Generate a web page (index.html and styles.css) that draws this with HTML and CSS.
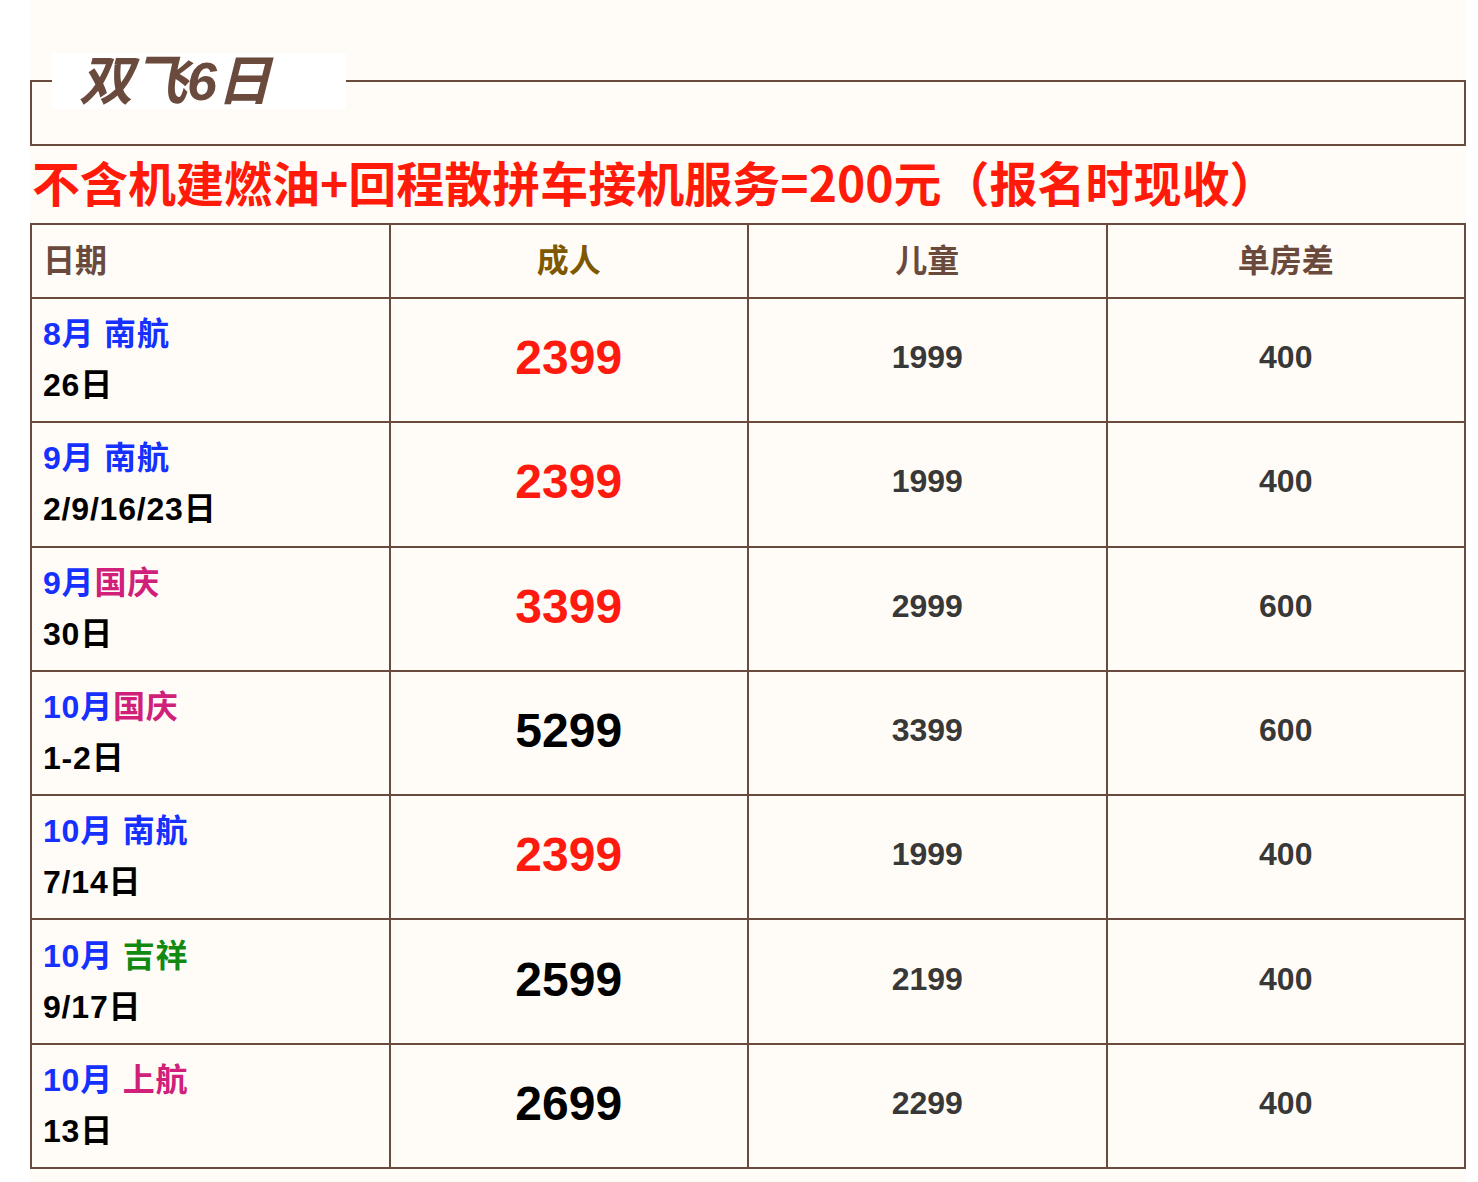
FILE: index.html
```html
<!DOCTYPE html>
<html lang="zh-CN">
<head>
<meta charset="utf-8">
<title>双飞6日</title>
<link rel="stylesheet" href="styles.css">
</head>
<body>
<div class="page">
  <fieldset class="title-box">
    <legend class="title">双飞6日</legend>
    <div class="title-fill"></div>
  </fieldset>
  <p class="notice">不含机建燃油+回程散拼车接机服务=200元（报名时现收）</p>
  <table class="prices">
    <thead>
      <tr class="head-row">
        <th class="c-date">日期</th>
        <th class="c-adult">成人</th>
        <th class="c-child">儿童</th>
        <th class="c-single">单房差</th>
      </tr>
    </thead>
    <tbody>
      <tr>
        <td class="date"><span class="blue">8月 南航</span><br><span class="day">26日</span></td>
        <td class="adult red">2399</td>
        <td class="sub">1999</td>
        <td class="sub">400</td>
      </tr>
      <tr>
        <td class="date"><span class="blue">9月 南航</span><br><span class="day">2/9/16/23日</span></td>
        <td class="adult red">2399</td>
        <td class="sub">1999</td>
        <td class="sub">400</td>
      </tr>
      <tr>
        <td class="date"><span class="blue">9月</span><span class="magenta">国庆</span><br><span class="day">30日</span></td>
        <td class="adult red">3399</td>
        <td class="sub">2999</td>
        <td class="sub">600</td>
      </tr>
      <tr>
        <td class="date"><span class="blue">10月</span><span class="magenta">国庆</span><br><span class="day">1-2日</span></td>
        <td class="adult black">5299</td>
        <td class="sub">3399</td>
        <td class="sub">600</td>
      </tr>
      <tr>
        <td class="date"><span class="blue">10月 南航</span><br><span class="day">7/14日</span></td>
        <td class="adult red">2399</td>
        <td class="sub">1999</td>
        <td class="sub">400</td>
      </tr>
      <tr>
        <td class="date"><span class="blue">10月</span> <span class="green">吉祥</span><br><span class="day">9/17日</span></td>
        <td class="adult black">2599</td>
        <td class="sub">2199</td>
        <td class="sub">400</td>
      </tr>
      <tr>
        <td class="date"><span class="blue">10月</span> <span class="magenta">上航</span><br><span class="day">13日</span></td>
        <td class="adult black">2699</td>
        <td class="sub">2299</td>
        <td class="sub">400</td>
      </tr>
    </tbody>
  </table>
</div>
</body>
</html>
```

FILE: styles.css
```css
html, body {
  margin: 0;
  padding: 0;
  background: #ffffff;
}

.page {
  margin-left: 30px;
  width: 1436px;
  min-height: 1182px;
  box-sizing: border-box;
  padding-top: 53px;
  background: #fffcf7;
  font-family: "Liberation Sans", "Noto Sans CJK SC", sans-serif;
}

.title-box {
  margin: 0;
  padding: 0;
  border: 2px solid #6b4a3e;
  min-width: 0;
}

.title {
  margin-left: 20px;
  padding: 0 75px 0 27px;
  height: 56px;
  line-height: 56px;
  background: #ffffff;
  color: #6b4a3e;
  font-family: "Liberation Sans", "Noto Sans CJK SC", sans-serif;
  font-size: 54px;
  font-weight: bold;
  font-style: italic;
}

.title-fill {
  height: 35px;
}

.notice {
  margin: 0;
  padding-left: 2px;
  height: 77px;
  line-height: 71px;
  padding-bottom: 0;
  box-sizing: border-box;
  color: #ff1a0a;
  font-family: "Noto Sans CJK SC", sans-serif;
  font-size: 48px;
  font-weight: bold;
  white-space: nowrap;
}

.prices {
  width: 1436px;
  table-layout: fixed;
  border-collapse: collapse;
  border: 2px solid #6b4a3e;
}

.prices th,
.prices td {
  border: 2px solid #6b4a3e;
  padding: 0 0 5px 0;
  font-weight: bold;
  vertical-align: middle;
}

.head-row {
  height: 74px;
}

.prices th {
  font-size: 32px;
  color: #6b4a3e;
  text-align: center;
  padding-bottom: 7px;
}

.prices th.c-date {
  text-align: left;
  padding-left: 11px;
}

.prices th.c-adult {
  color: #7d5800;
}

.prices tbody tr {
  height: 124.3px;
}

.prices td.date {
  padding: 0 0 0 11px;
  font-size: 32px;
  line-height: 51px;
  letter-spacing: 0.8px;
  color: #000000;
}

.blue { color: #1530ff; }
.magenta { color: #d0207a; }
.green { color: #128a12; }
.day { color: #000000; }

.adult {
  text-align: center;
  font-size: 48px;
}

.red { color: #ff1a0f; }
.black { color: #000000; }

.sub {
  text-align: center;
  font-size: 32px;
  color: #383838;
}
```
